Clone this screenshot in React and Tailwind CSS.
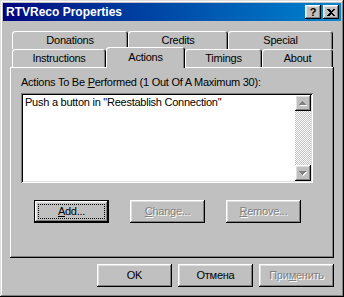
import React from "react";

const raised =
  "shadow-[inset_-1px_-1px_#000,inset_1px_1px_#fff,inset_-2px_-2px_#808080,inset_2px_2px_#dfdfdf]";

function Tab({ label, width, selected }) {
  if (selected) {
    return (
      <div
        className="relative z-10 -mt-[2px] h-[21px] flex justify-center pt-[4px] bg-[#c0c0c0] rounded-t-[3px] shadow-[inset_1px_1px_#fff,inset_-1px_0_#000,inset_-2px_0_#808080]"
        style={{ width }}
      >
        {label}
      </div>
    );
  }
  return (
    <div
      className="h-[18px] flex justify-center pt-[3px] bg-[#c0c0c0] rounded-t-[3px] shadow-[inset_1px_1px_#fff,inset_-1px_0_#000,inset_-2px_0_#808080]"
      style={{ width }}
    >
      {label}
    </div>
  );
}

function Button({ children, disabled, isDefault }) {
  if (isDefault) {
    return (
      <div className="w-[75px] h-[23px] border border-black flex">
        <div className={"flex-1 flex p-[3px] " + raised}>
          <div className="flex-1 flex items-center justify-center border border-dotted border-black">
            {children}
          </div>
        </div>
      </div>
    );
  }
  return (
    <div
      className={
        "w-[75px] h-[23px] flex items-center justify-center " +
        raised +
        (disabled ? " text-[#808080] [text-shadow:1px_1px_0_#fff]" : "")
      }
    >
      {children}
    </div>
  );
}

function Arrow({ up }) {
  return (
    <div className={"w-[16px] h-[16px] flex items-center justify-center bg-[#c0c0c0] " + raised}>
      <svg width="9" height="6" viewBox="0 0 9 6" shapeRendering="crispEdges">
        {up ? (
          <>
            <path d="M1 5h7v1H1zM2 4h5v1H2zM3 3h3v1H3zM4 2h1v1H4z" fill="#fff" />
            <path d="M0 4h7v1H0zM1 3h5v1H1zM2 2h3v1H2zM3 1h1v1H3z" fill="#808080" />
          </>
        ) : (
          <>
            <path d="M1 2h7v1H1zM2 3h5v1H2zM3 4h3v1H3zM4 5h1v1H4z" fill="#fff" />
            <path d="M0 1h7v1H0zM1 2h5v1H1zM2 3h3v1H2zM3 4h1v1H3z" fill="#808080" />
          </>
        )}
      </svg>
    </div>
  );
}

export default function App() {
  return (
    <div className="w-[344px] h-[297px] bg-[#c0c0c0] p-[3px] flex flex-col text-[11px] tracking-[-0.25px] leading-[13px] text-black font-['Liberation_Sans',Arial,sans-serif] shadow-[inset_-1px_-1px_#000,inset_1px_1px_#dfdfdf,inset_-2px_-2px_#808080,inset_2px_2px_#fff]">
      {/* title bar */}
      <div className="h-[18px] flex items-center justify-between pl-[3px] pr-[2px] bg-linear-to-r from-[#000080] to-[#1084d0]">
        <span className="text-white font-bold text-[12px] tracking-[0px]">RTVReco Properties</span>
        <div className="flex gap-[2px]">
          <div className={"w-[16px] h-[14px] flex items-center justify-center bg-[#c0c0c0] font-bold text-[11px] leading-none " + raised}>
            ?
          </div>
          <div className={"w-[16px] h-[14px] flex items-center justify-center bg-[#c0c0c0] " + raised}>
            <svg width="8" height="7" viewBox="0 0 8 7" shapeRendering="crispEdges">
              <path d="M0 0h2l2 2 2-2h2L5 3.5 8 7H6L4 5 2 7H0l3-3.5z" fill="#000" />
            </svg>
          </div>
        </div>
      </div>

      <div className="flex-1 flex flex-col px-[7px] pt-[10px]">
        {/* tabs */}
        <div className="pl-[2px]">
          <div className="flex h-[18px]">
            <Tab label="Donations" width={116} />
            <Tab label="Credits" width={100} />
            <Tab label="Special" width={105} />
          </div>
          <div className="flex h-[18px]">
            <Tab label="Instructions" width={94} />
            <Tab label="Actions" width={79} selected />
            <Tab label="Timings" width={77} />
            <Tab label="About" width={71} />
          </div>
        </div>

        {/* panel */}
        <div className="h-[191px] pt-[9px] pl-[11px] shadow-[inset_-1px_-1px_#000,inset_1px_1px_#fff,inset_-2px_-2px_#808080]">
          <div>
            Actions To Be <span className="underline">P</span>erformed (1 Out Of A Maximum 30):
          </div>
          <div className="mt-[4px] w-[292px] h-[90px] bg-white p-[2px] flex shadow-[inset_1px_1px_#808080,inset_-1px_-1px_#fff,inset_2px_2px_#000,inset_-2px_-2px_#dfdfdf]">
            <div className="flex-1 pl-[2px] pt-[1px]">Push a button in "Reestablish Connection"</div>
            <div className="w-[16px] flex flex-col">
              <Arrow up />
              <div className="flex-1 bg-[repeating-conic-gradient(#c0c0c0_0_25%,#fff_0_50%)] bg-[length:2px_2px]" />
              <Arrow />
            </div>
          </div>
          <div className="mt-[17px] ml-[13px] flex gap-[21px]">
            <Button isDefault>
              <span className="underline">A</span>dd...
            </Button>
            <Button disabled>
              <span className="underline">C</span>hange...
            </Button>
            <Button disabled>
              <span className="underline">R</span>emove...
            </Button>
          </div>
        </div>

        {/* dialog buttons */}
        <div className="mt-[6px] flex justify-end gap-[6px]">
          <Button>OK</Button>
          <Button>Отмена</Button>
          <Button disabled>
            При<span className="underline">м</span>енить
          </Button>
        </div>
      </div>
    </div>
  );
}
